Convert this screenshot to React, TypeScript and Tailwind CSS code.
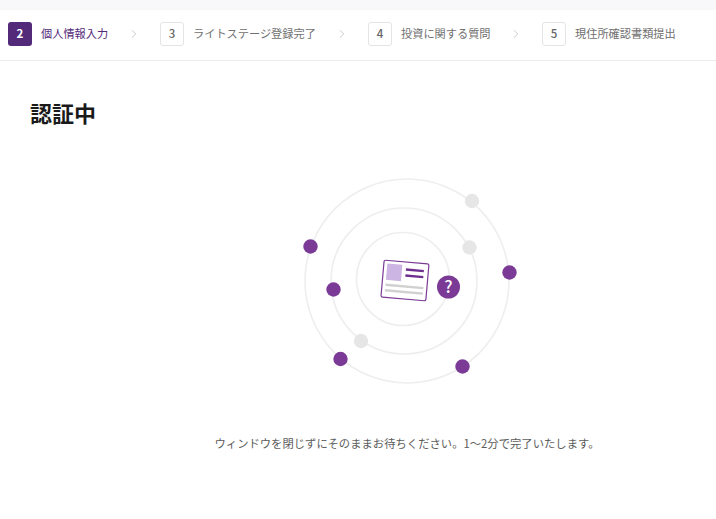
import { ChevronRight } from 'lucide-react';

const font = { fontFamily: '"Noto Sans CJK JP", "Noto Sans", sans-serif' };

const steps = [
  { no: 2, label: '個人情報入力', active: true, w: 'w-[152px]' },
  { no: 3, label: 'ライトステージ登録完了', active: false, w: 'w-[208px]' },
  { no: 4, label: '投資に関する質問', active: false, w: 'w-[174px]' },
  { no: 5, label: '現住所確認書類提出', active: false, w: '' },
];

const purpleDots = [
  [20.5, 76.5],
  [219.5, 102.5],
  [43.5, 119.5],
  [50.5, 189],
  [172.5, 196.5],
];
const greyDots = [
  [182, 31],
  [179.5, 77.5],
  [71, 171],
];

function Orbit() {
  return (
    <svg width="240" height="220" viewBox="0 0 240 220" fill="none" className="block">
      <circle cx="117" cy="111" r="102" stroke="#eeeeee" strokeWidth="1.6" />
      <circle cx="114" cy="111" r="73" stroke="#eeeeee" strokeWidth="1.6" />
      <circle cx="113" cy="109" r="46.5" stroke="#eeeeee" strokeWidth="1.6" />
      {purpleDots.map(([x, y]) => (
        <circle key={x} cx={x} cy={y} r="7.2" fill="#7a3a96" />
      ))}
      {greyDots.map(([x, y]) => (
        <circle key={x} cx={x} cy={y} r="7.2" fill="#e6e6e6" />
      ))}
      <g transform="rotate(5 115 110)">
        <rect x="92.5" y="92" width="45" height="37" rx="1.5" fill="#ffffff" stroke="#7a3a96" strokeWidth="1.2" />
        <rect x="96" y="95" width="15" height="16.5" fill="#cdb5e3" />
        <path d="M115 99.5h18M115 105.5h18" stroke="#6f2f8f" strokeWidth="2.4" />
        <path d="M96 116.5h38M96 122h38" stroke="#d0d0d0" strokeWidth="2.4" />
      </g>
      <circle cx="158.5" cy="117" r="11.5" fill="#7a3a96" />
      <text x="158.5" y="123" textAnchor="middle" fontSize="17" fontWeight="500" fill="#ffffff" style={font}>?</text>
    </svg>
  );
}

export default function App() {
  return (
    <div className="min-h-[519px] bg-white" style={font}>
      <div className="h-[10px] bg-[#f8f8fa]" />
      <div className="flex h-[51px] items-center border-b border-[#ebebeb] pl-2 pb-[3px]">
        {steps.map((s) => (
          <div key={s.no} className={`flex items-center ${s.w}`}>
            <span
              className={
                s.active
                  ? 'flex h-6 w-6 items-center justify-center rounded-[3px] bg-[#532a7a] text-[11.5px] font-bold text-white'
                  : 'flex h-6 w-6 items-center justify-center rounded-[3px] border border-[#e4e4e4] text-[11.5px] font-medium text-[#666666]'
              }
            >
              {s.no}
            </span>
            <span className={s.active ? 'ml-[9px] text-[11.2px] text-[#532a7a]' : 'ml-[9px] text-[11.2px] text-[#707070]'}>
              {s.label}
            </span>
            {s.no !== 5 && <ChevronRight className="ml-auto mr-[19px] h-[14px] w-[14px] text-[#b8b8b8]" strokeWidth={1.25} />}
          </div>
        ))}
      </div>
      <h1 className="pl-[30px] pt-[36px] text-[22px] leading-[30px] font-bold text-[#1a1a1a]">認証中</h1>
      <div className="flex flex-col items-center pl-[98px]">
        <div className="mt-[43px] ml-[6px]">
          <Orbit />
        </div>
        <p className="mt-[45px] text-[11.33px] leading-4 text-[#5c5c5c]">
          ウィンドウを閉じずにそのままお待ちください。1～2分で完了いたします。
        </p>
      </div>
    </div>
  );
}
